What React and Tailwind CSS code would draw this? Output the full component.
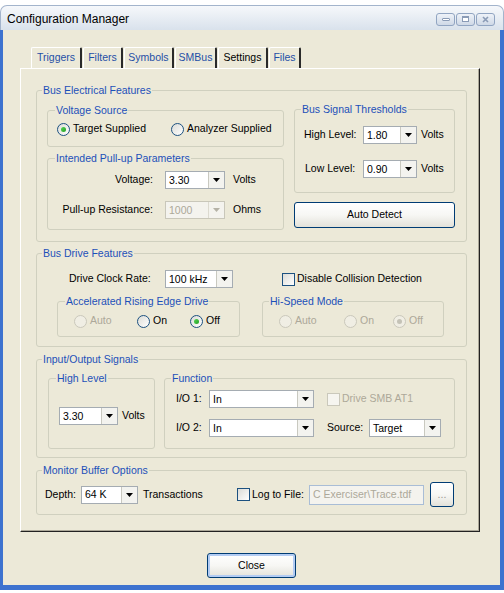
import React from 'react';

const BLUE = 'text-[#1c50b9]';

const Group = ({ title, ml = 'ml-[5px]', className = '', children }) => (
  <fieldset className={`border border-[#d0d0bf] rounded-[3px] ${className}`}>
    <legend className={`${ml} px-[1px] leading-[13px] ${BLUE}`}>{title}</legend>
    {children}
  </fieldset>
);

const Arrow = ({ disabled }) => (
  <svg width="7" height="4" viewBox="0 0 7 4">
    <path d="M0 0h7L3.5 4z" fill={disabled ? '#b5b2a6' : '#000'} />
  </svg>
);

const Select = ({ value, className = '', disabled }) => (
  <div
    className={`flex h-[18px] border ${
      disabled ? 'border-[#c9c7ba] bg-[#f4f3ee] text-[#aca899]' : 'border-[#a5acb2] bg-white'
    } ${className}`}
  >
    <div className="flex-1 flex items-center pl-[3px] leading-none">{value}</div>
    <div
      className={`w-[16px] flex items-center justify-center border-l ${
        disabled ? 'border-[#dcdad0] bg-[#f4f3ee]' : 'border-[#c9c9c0] bg-[#f3f3ef]'
      }`}
    >
      <Arrow disabled={disabled} />
    </div>
  </div>
);

const Radio = ({ label, checked, disabled, className = '' }) => (
  <div className={`flex items-center ${className}`}>
    <span
      className={`w-[13px] h-[13px] rounded-full border flex items-center justify-center ${
        disabled
          ? 'border-[#cac8bb] bg-[#f0eee4]'
          : 'border-[#1c5180] bg-gradient-to-br from-[#dcdcd6] to-white'
      }`}
    >
      {checked && (
        <span
          className={`w-[5px] h-[5px] rounded-full ${
            disabled ? 'bg-[#c4c2b6]' : 'bg-gradient-to-br from-[#55d355] to-[#21a121]'
          }`}
        />
      )}
    </span>
    <span className={`ml-[3px] ${disabled ? 'text-[#aca899]' : ''}`}>{label}</span>
  </div>
);

const Checkbox = ({ disabled, className = '' }) => (
  <span
    className={`block w-[13px] h-[13px] border shrink-0 ${
      disabled
        ? 'border-[#cac8bb] bg-[#f6f5f0]'
        : 'border-[#1c5180] bg-gradient-to-br from-[#dcdcd7] to-white'
    } ${className}`}
  />
);

const Button = ({ children, className = '' }) => (
  <div
    className={`flex items-center justify-center border border-[#003c74] rounded-[3px] bg-gradient-to-b from-white via-[#f7f7f4] to-[#e3e2da] ${className}`}
  >
    {children}
  </div>
);

const tabs = [
  { name: 'Triggers', w: 'w-[51px]' },
  { name: 'Filters', w: 'w-[40px]' },
  { name: 'Symbols', w: 'w-[50px]' },
  { name: 'SMBus', w: 'w-[42px]' },
  { name: 'Settings', w: 'w-[50px]', active: true },
  { name: 'Files', w: 'w-[32px]' },
];

const TitleButton = ({ children }) => (
  <div className="w-[19px] h-[13px] rounded-[3px] border border-[#91a5c2] bg-gradient-to-b from-[#eef2f8] to-[#cfd9e7] flex items-center justify-center">
    {children}
  </div>
);

export default function App() {
  return (
    <div className="w-[504px] h-[593px] bg-white pt-[5px] overflow-hidden font-['Liberation_Sans',Arial,sans-serif] text-[10.5px] text-black">
      {/* title bar */}
      <div className="h-[25px] rounded-t-[7px] border border-b-0 border-[#a3b4cc] bg-gradient-to-b from-[#f6f8fb] to-[#d9e2ec] flex items-center pl-[6px] pr-[8px] pt-[2px]">
        <span className="text-[12px]">Configuration Manager</span>
        <div className="ml-auto flex gap-[1px]">
          <TitleButton>
            <span className="w-[8px] h-[3px] rounded-[1px] border border-[#8a9bb6] bg-white" />
          </TitleButton>
          <TitleButton>
            <span className="w-[7px] h-[6px] border border-[#8a9bb6] border-t-2 bg-white" />
          </TitleButton>
          <TitleButton>
            <svg width="7" height="7" viewBox="0 0 7 7">
              <path d="M1 1l5 5M6 1L1 6" stroke="#8a9bb6" strokeWidth="1.6" />
            </svg>
          </TitleButton>
        </div>
      </div>

      {/* body */}
      <div className="h-[560px] bg-[#ece9d8] border-l-[3px] border-r-[4px] border-b-[5px] border-[#3d72cf] flex flex-col pt-[17px] pl-[17px]">
        <div className="flex gap-[1px] ml-[11px] h-[21px]">
          {tabs.map((t) => (
            <div
              key={t.name}
              className={`${t.w} h-full flex items-center justify-center border-t border-l border-white border-r-2 border-r-[#2a2a2a] rounded-t-[2px] ${
                t.active ? 'text-black' : 'text-[#1f4fa6]'
              }`}
            >
              {t.name}
            </div>
          ))}
        </div>

        {/* tab panel */}
        <div className="w-[460px] h-[464px] border-t border-l border-white border-r border-b border-r-[#222] border-b-[#222] shadow-[inset_-1px_-1px_0_#aca899] pl-[15px] pt-[15px]">
          {/* Bus Electrical Features */}
          <Group title="Bus Electrical Features" className="w-[431px] h-[158px]">
            <div className="flex items-start pl-[10px]">
              <div className="w-[237px]">
                <Group title="Voltage Source" ml="ml-[7px]" className="mt-[7px] h-[43px]">
                  <div className="flex items-center h-[14px] mt-[5px] pl-[9px]">
                    <Radio label="Target Supplied" checked className="w-[114px]" />
                    <Radio label="Analyzer Supplied" />
                  </div>
                </Group>
                <Group title="Intended Pull-up Parameters" ml="ml-[7px]" className="mt-[5px] h-[78px]">
                  <div className="pt-[6px] flex flex-col gap-[12px]">
                    <div className="flex items-center h-[18px]">
                      <span className="w-[105px] text-right">Voltage:</span>
                      <Select value="3.30" className="ml-[12px] w-[60px]" />
                      <span className="ml-[8px]">Volts</span>
                    </div>
                    <div className="flex items-center h-[18px]">
                      <span className="w-[105px] text-right">Pull-up Resistance:</span>
                      <Select value="1000" disabled className="ml-[12px] w-[60px]" />
                      <span className="ml-[8px]">Ohms</span>
                    </div>
                  </div>
                </Group>
              </div>
              <div className="ml-[10px] w-[161px]">
                <Group title="Bus Signal Thresholds" ml="ml-[6px]" className="mt-[6px] h-[90px]">
                  <div className="pt-[10px] pl-[9px] flex flex-col gap-[16px]">
                    <div className="flex items-center h-[18px]">
                      <span className="w-[59px]">High Level:</span>
                      <Select value="1.80" className="w-[54px]" />
                      <span className="ml-[4px]">Volts</span>
                    </div>
                    <div className="flex items-center h-[18px]">
                      <span className="w-[59px] pl-[1px]">Low Level:</span>
                      <Select value="0.90" className="w-[54px]" />
                      <span className="ml-[4px]">Volts</span>
                    </div>
                  </div>
                </Group>
                <Button className="mt-[9px] w-full h-[26px]">Auto Detect</Button>
              </div>
            </div>
          </Group>

          {/* Bus Drive Features */}
          <Group title="Bus Drive Features" className="mt-[5px] w-[431px] h-[100px]">
            <div className="flex items-center h-[18px] mt-[10px] pl-[32px]">
              <span className="w-[96px]">Drive Clock Rate:</span>
              <Select value="100 kHz" className="w-[68px]" />
              <Checkbox className="ml-[49px]" />
              <span className="ml-[2px]">Disable Collision Detection</span>
            </div>
            <div className="flex mt-[7px] pl-[20px]">
              <Group title="Accelerated Rising Edge Drive" ml="ml-[7px]" className="w-[183px] h-[42px]">
                <div className="flex items-center h-[14px] mt-[6px] pl-[16px]">
                  <Radio label="Auto" disabled className="w-[63px]" />
                  <Radio label="On" className="w-[53px]" />
                  <Radio label="Off" checked />
                </div>
              </Group>
              <Group title="Hi-Speed Mode" ml="ml-[6px]" className="ml-[22px] w-[182px] h-[42px]">
                <div className="flex items-center h-[14px] mt-[6px] pl-[16px]">
                  <Radio label="Auto" disabled className="w-[65px]" />
                  <Radio label="On" disabled className="w-[49px]" />
                  <Radio label="Off" checked disabled />
                </div>
              </Group>
            </div>
          </Group>

          {/* Input/Output Signals */}
          <Group title="Input/Output Signals" className="mt-[6px] w-[431px] h-[105px]">
            <div className="flex mt-[6px] pl-[11px]">
              <Group title="High Level" ml="ml-[7px]" className="w-[107px] h-[77px]">
                <div className="flex items-center pt-[22px] pl-[10px]">
                  <Select value="3.30" className="w-[59px]" />
                  <span className="ml-[4px]">Volts</span>
                </div>
              </Group>
              <Group title="Function" ml="ml-[6px]" className="ml-[9px] w-[291px] h-[77px]">
                <div className="pt-[5px] pl-[11px] flex flex-col gap-[11px]">
                  <div className="flex items-center h-[18px]">
                    <span className="w-[33px]">I/O 1:</span>
                    <Select value="In" className="w-[105px]" />
                    <Checkbox disabled className="ml-[13px]" />
                    <span className="ml-[2px] text-[#aca899]">Drive SMB AT1</span>
                  </div>
                  <div className="flex items-center h-[18px]">
                    <span className="w-[33px]">I/O 2:</span>
                    <Select value="In" className="w-[105px]" />
                    <span className="ml-[13px] w-[42px]">Source:</span>
                    <Select value="Target" className="w-[72px]" />
                  </div>
                </div>
              </Group>
            </div>
          </Group>

          {/* Monitor Buffer Options */}
          <Group title="Monitor Buffer Options" className="mt-[6px] w-[431px] h-[51px]">
            <div className="flex items-center h-[25px] mt-[5px] pl-[8px]">
              <span className="w-[36px]">Depth:</span>
              <Select value="64 K" className="w-[57px]" />
              <span className="ml-[5px] w-[94px]">Transactions</span>
              <Checkbox />
              <span className="ml-[2px] w-[57px]">Log to File:</span>
              <div className="w-[115px] h-[20px] border border-[#a9bdd6] bg-[#f4f3ee] text-[#aca899] flex items-center pl-[3px]">
                C Exerciser\Trace.tdf
              </div>
              <Button className="ml-[6px] w-[24px] h-[25px] text-[#9a9a92]">...</Button>
            </div>
          </Group>
        </div>

        <Button className="mt-[21px] self-center -ml-[17px] w-[89px] h-[25px] shadow-[inset_0_0_0_2px_#b3ccf3]">
          Close
        </Button>
      </div>
    </div>
  );
}
